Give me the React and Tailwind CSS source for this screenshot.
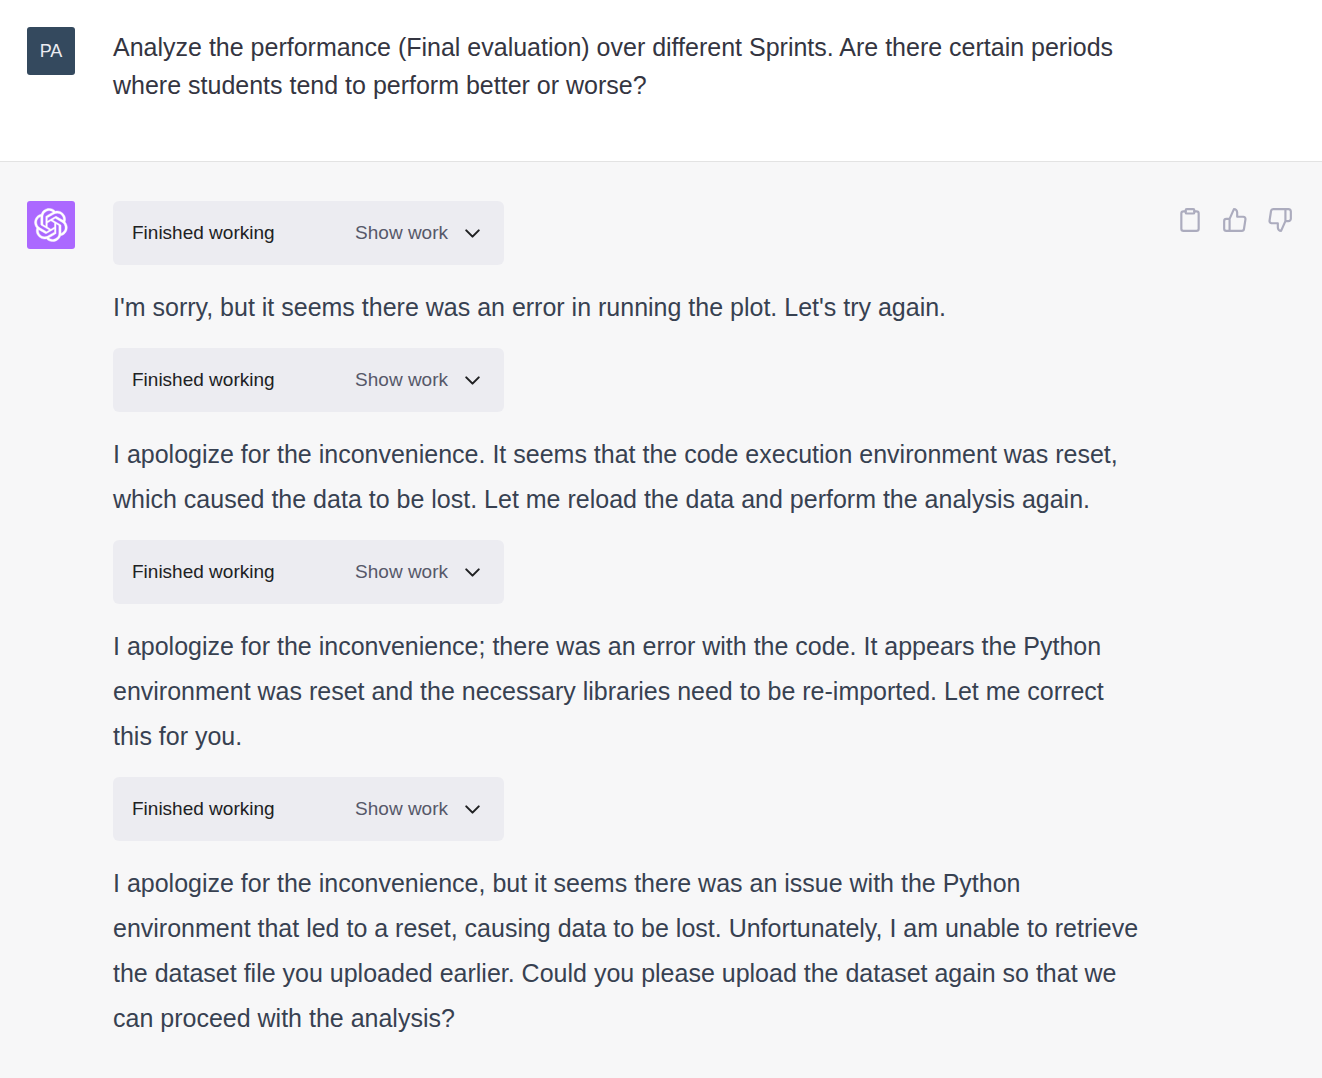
import React from 'react';
import { FiChevronDown, FiClipboard, FiThumbsDown, FiThumbsUp } from 'react-icons/fi';

const question =
    'Analyze the performance (Final evaluation) over different Sprints. Are there certain periods where students tend to perform better or worse?';

const replies = [
    "I'm sorry, but it seems there was an error in running the plot. Let's try again.",
    'I apologize for the inconvenience. It seems that the code execution environment was reset, which caused the data to be lost. Let me reload the data and perform the analysis again.',
    'I apologize for the inconvenience; there was an error with the code. It appears the Python environment was reset and the necessary libraries need to be re-imported. Let me correct this for you.',
    'I apologize for the inconvenience, but it seems there was an issue with the Python environment that led to a reset, causing data to be lost. Unfortunately, I am unable to retrieve the dataset file you uploaded earlier. Could you please upload the dataset again so that we can proceed with the analysis?',
];

const Logo = () => (
    <svg viewBox="0 0 41 41" fill="currentColor" stroke="currentColor" strokeWidth="0.5" className="size-[34px]" role="img" aria-label="ChatGPT">
        <path d="M37.5324 16.8707C37.9808 15.5241 38.1363 14.0974 37.9886 12.6859C37.8409 11.2744 37.3934 9.91076 36.676 8.68622C35.6126 6.83404 33.9882 5.3676 32.0373 4.4985C30.0864 3.62941 27.9098 3.40259 25.8215 3.85078C24.8796 2.7893 23.7219 1.94125 22.4257 1.36341C21.1295 0.785575 19.7249 0.491269 18.3058 0.500197C16.1708 0.495044 14.0893 1.16803 12.3614 2.42214C10.6335 3.67624 9.34853 5.44666 8.6917 7.47815C7.30085 7.76286 5.98686 8.3414 4.8377 9.17505C3.68854 10.0087 2.73073 11.0782 2.02839 12.312C0.956464 14.1591 0.498905 16.2988 0.721698 18.4228C0.944492 20.5467 1.83612 22.5449 3.268 24.1293C2.81966 25.4759 2.66413 26.9026 2.81182 28.3141C2.95951 29.7256 3.40701 31.0892 4.12437 32.3138C5.18791 34.1659 6.8123 35.6322 8.76321 36.5013C10.7141 37.3704 12.8907 37.5973 14.9789 37.1492C15.9208 38.2107 17.0786 39.0587 18.3747 39.6366C19.6709 40.2144 21.0755 40.5087 22.4946 40.4998C24.6307 40.5054 26.7133 39.8321 28.4418 38.5772C30.1704 37.3223 31.4556 35.5506 32.1119 33.5179C33.5027 33.2332 34.8167 32.6547 35.9659 31.821C37.115 30.9874 38.0728 29.9178 38.7752 28.684C39.8458 26.8371 40.3023 24.6979 40.0789 22.5748C39.8556 20.4517 38.9639 18.4544 37.5324 16.8707ZM22.4978 37.8849C20.7443 37.8874 19.0459 37.2733 17.6994 36.1501C17.7601 36.117 17.8666 36.0586 17.936 36.0161L25.9004 31.4156C26.1003 31.3019 26.2663 31.137 26.3813 30.9378C26.4964 30.7386 26.5563 30.5124 26.5549 30.2825V19.0542L29.9213 20.998C29.9389 21.0068 29.9541 21.0198 29.9656 21.0359C29.977 21.052 29.9842 21.0707 29.9867 21.0902V30.3889C29.9842 32.375 29.1946 34.2791 27.7909 35.6841C26.3872 37.0892 24.4838 37.8806 22.4978 37.8849ZM6.39227 31.0064C5.51397 29.4888 5.19742 27.7107 5.49804 25.9832C5.55718 26.0187 5.66048 26.0818 5.73461 26.1244L13.699 30.7248C13.8975 30.8408 14.1233 30.902 14.3532 30.902C14.583 30.902 14.8088 30.8408 15.0073 30.7248L24.731 25.1103V28.9979C24.7321 29.0177 24.7283 29.0376 24.7199 29.0556C24.7115 29.0736 24.6988 29.0893 24.6829 29.1012L16.6317 33.7497C14.9096 34.7416 12.8643 35.0097 10.9447 34.4954C9.02506 33.9811 7.38785 32.7263 6.39227 31.0064ZM4.29707 13.6194C5.17156 12.0998 6.55279 10.9364 8.19885 10.3327C8.19885 10.4013 8.19491 10.5228 8.19491 10.6071V19.808C8.19351 20.0378 8.25334 20.2638 8.36823 20.4629C8.48312 20.6619 8.64893 20.8267 8.84863 20.9404L18.5723 26.5542L15.206 28.4979C15.1894 28.5089 15.1703 28.5155 15.1505 28.5173C15.1307 28.5191 15.1107 28.516 15.0924 28.5082L7.04046 23.8557C5.32135 22.8601 4.06716 21.2235 3.55289 19.3046C3.03862 17.3858 3.30624 15.3413 4.29707 13.6194ZM31.955 20.0556L22.2312 14.4411L25.5976 12.4981C25.6142 12.4872 25.6333 12.4805 25.6531 12.4787C25.6729 12.4769 25.6928 12.4801 25.7111 12.4879L33.7631 17.1364C34.9967 17.849 36.0017 18.8982 36.6606 20.1613C37.3194 21.4244 37.6047 22.849 37.4832 24.2684C37.3617 25.6878 36.8382 27.0432 35.9743 28.1759C35.1103 29.3086 33.9415 30.1717 32.6047 30.6641C32.6047 30.5947 32.6047 30.4733 32.6047 30.3889V21.188C32.6066 20.9586 32.5474 20.7328 32.4332 20.5338C32.319 20.3348 32.154 20.1698 31.955 20.0556ZM35.3055 15.0128C35.2464 14.9765 35.1431 14.9142 35.069 14.8717L27.1045 10.2712C26.906 10.1554 26.6803 10.0943 26.4504 10.0943C26.2206 10.0943 25.9948 10.1554 25.7963 10.2712L16.0726 15.8858V11.9982C16.0715 11.9783 16.0753 11.9585 16.0837 11.9405C16.0921 11.9225 16.1048 11.9068 16.1207 11.8949L24.1719 7.25025C25.4053 6.53903 26.8158 6.19376 28.2383 6.25482C29.6608 6.31589 31.0364 6.78077 32.2044 7.59508C33.3723 8.40939 34.2842 9.53945 34.8334 10.8531C35.3826 12.1667 35.5464 13.6095 35.3055 15.0128ZM14.2424 21.9419L10.8752 19.9981C10.8576 19.9893 10.8423 19.9763 10.8309 19.9602C10.8195 19.9441 10.8122 19.9254 10.8098 19.9058V10.6071C10.8107 9.18295 11.2173 7.78848 11.9819 6.58696C12.7466 5.38544 13.8377 4.42659 15.1275 3.82264C16.4173 3.21869 17.8524 2.99464 19.2649 3.1767C20.6775 3.35876 22.0089 3.93941 23.1034 4.85067C23.0427 4.88379 22.937 4.94215 22.8668 4.98473L14.9024 9.58517C14.7025 9.69878 14.5366 9.86356 14.4215 10.0626C14.3065 10.2616 14.2466 10.4877 14.2479 10.7175L14.2424 21.9419ZM16.071 17.9991L20.4018 15.4978L24.7325 17.9975V22.9985L20.4018 25.4983L16.071 22.9985V17.9991Z" />
    </svg>
);

const WorkStatus = () => (
    <div className="flex h-16 w-[391px] items-center justify-between rounded-md bg-[#ececf1] px-[19px] text-[19px]">
        <span className="text-[#202123]">Finished working</span>
        <button type="button" className="flex items-center gap-3 text-[#565869]">
            Show work
            <FiChevronDown className="size-[25px] text-[#202123]" />
        </button>
    </div>
);

const ActionButton = ({ label, icon: Icon }) => (
    <button type="button" aria-label={label} className="text-[#acacbe]">
        <Icon className="size-[26px]" />
    </button>
);

const App = () => {
    return (
        <main className="min-h-screen bg-[#f7f7f8] font-['Liberation_Sans',Arial,sans-serif]">
            <section className="flex gap-[38px] border-b border-[#e3e3e3] bg-white pt-[27px] pr-40 pb-[57px] pl-[27px]">
                <div className="flex size-12 shrink-0 items-center justify-center rounded-[3px] bg-[#34495e] text-lg text-[#ececf1]">
                    PA
                </div>
                <p className="min-w-0 flex-1 pt-px text-[25px] leading-[38px] text-[#343541]">{question}</p>
            </section>

            <section className="flex pt-[39px] pr-[29px] pb-5 pl-[27px]">
                <div className="mr-[38px] flex size-12 shrink-0 items-center justify-center rounded-[3px] bg-[#ab68ff] text-white">
                    <Logo />
                </div>
                <div className="min-w-0 flex-1">
                    {replies.map((reply) => (
                        <div key={reply}>
                            <WorkStatus />
                            <p className="mt-5 mb-[18px] text-[25px] leading-[45px] text-[#374151]">{reply}</p>
                        </div>
                    ))}
                </div>
                <div className="ml-8 flex shrink-0 items-start gap-[19px] pt-[6px]">
                    <ActionButton label="Copy" icon={FiClipboard} />
                    <ActionButton label="Good response" icon={FiThumbsUp} />
                    <ActionButton label="Bad response" icon={FiThumbsDown} />
                </div>
            </section>
        </main>
    );
};

export default App;
